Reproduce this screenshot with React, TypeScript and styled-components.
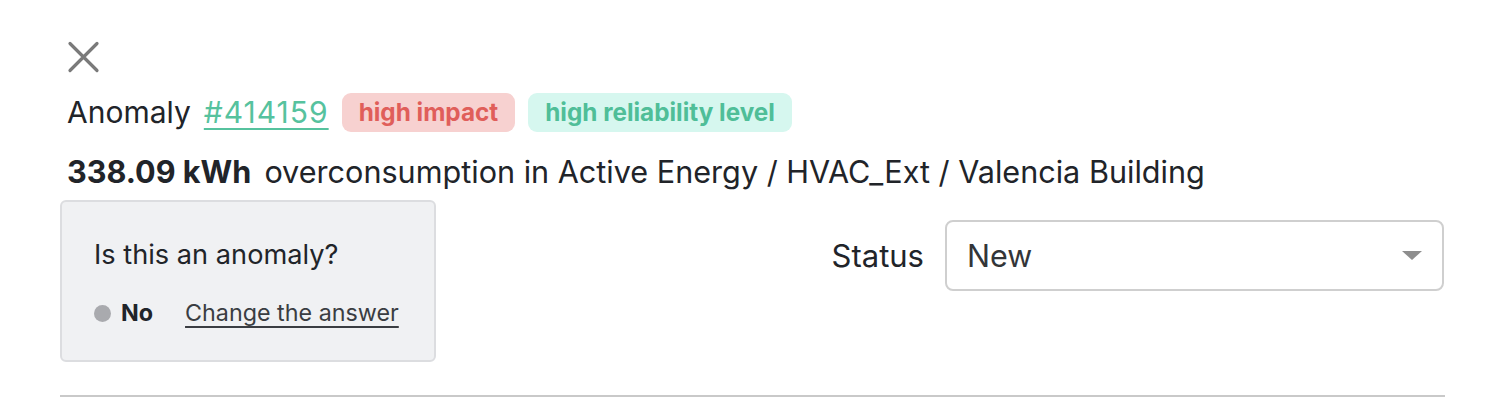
import React from "react";
import styled, { createGlobalStyle } from "styled-components";

const Global = createGlobalStyle`
  html, body { margin: 0; padding: 0; background: #ffffff; }
  body { font-family: Inter, "Noto Sans", Arial, sans-serif; color: #212429; }
`;

const Page = styled.div`
  width: 1385px;
  margin-left: 60px;
  padding-top: 40px;
`;

const CloseButton = styled.button`
  display: block;
  width: 34px;
  height: 34px;
  margin-left: 6px;
  padding: 0;
  border: none;
  background: transparent;
  cursor: pointer;
`;

const Header = styled.div`
  padding-left: 7px;
  display: flex;
  flex-direction: column;
  gap: 20px;
  margin-top: 18px;
`;

const TitleRow = styled.div`
  display: flex;
  align-items: center;
  gap: 13px;
  font-size: 30px;
  line-height: 40px;
`;

const IdLink = styled.a`
  color: #56c29e;
  letter-spacing: 1px;
  text-decoration: underline;
  text-underline-offset: 5px;
  text-decoration-thickness: 2px;
`;

const Badge = styled.span<{ $tone: "red" | "green" }>`
  display: inline-flex;
  align-items: center;
  box-sizing: border-box;
  height: 39px;
  padding: 0 17px;
  border-radius: 9px;
  font-size: 24.3px;
  font-weight: 700;
  background: ${(p) => (p.$tone === "red" ? "#f7d1d0" : "#d6f7ef")};
  color: ${(p) => (p.$tone === "red" ? "#e05e5a" : "#4fbe98")};
`;

const Summary = styled.div`
  font-size: 30.6px;
  line-height: 40px;
  display: flex;
  gap: 13px;
`;

const Amount = styled.strong`
  font-weight: 700;
`;

const Row = styled.div`
  display: flex;
  justify-content: space-between;
  align-items: flex-start;
  margin-top: 8px;
`;

const Card = styled.div`
  box-sizing: border-box;
  width: 376px;
  height: 162px;
  background: #f0f1f3;
  border: 2px solid #dcdde0;
  border-radius: 6px;
  display: flex;
  flex-direction: column;
  padding: 36px 0 0 32px;
`;

const Question = styled.div`
  font-size: 27.2px;
  line-height: 34px;
  color: #212429;
`;

const AnswerRow = styled.div`
  display: flex;
  align-items: center;
  margin-top: 26px;
  font-size: 23.3px;
  line-height: 30px;
`;

const Dot = styled.span`
  width: 17px;
  height: 17px;
  border-radius: 50%;
  background: #a9aaae;
  margin-right: 10px;
`;

const AnswerValue = styled.strong`
  font-weight: 700;
  margin-right: 32px;
`;

const ChangeLink = styled.a`
  color: #3a3d42;
  text-decoration: underline;
  text-underline-offset: 5px;
  text-decoration-thickness: 2px;
`;

const StatusGroup = styled.div`
  display: flex;
  align-items: center;
  gap: 21px;
  margin-top: 20px;
  margin-right: 1px;
`;

const StatusLabel = styled.span`
  font-size: 31px;
  color: #212429;
`;

const Select = styled.div`
  box-sizing: border-box;
  width: 499px;
  height: 71px;
  border: 2px solid #cfcfcf;
  border-radius: 8px;
  display: flex;
  align-items: center;
  justify-content: space-between;
  padding: 0 20px 0 20px;
  font-size: 30.5px;
  color: #333538;
`;

const Caret = styled.span`
  width: 0;
  height: 0;
  border-left: 10px solid transparent;
  border-right: 10px solid transparent;
  border-top: 9px solid #8e8e8e;
`;

const Divider = styled.hr`
  margin: 33px 0 0 0;
  border: none;
  height: 2px;
  background: #c9c9c9;
`;

export default function App() {
  return (
    <>
      <Global />
      <Page>
        <CloseButton aria-label="Close">
          <svg width="34" height="34" viewBox="0 0 34 34">
            <path d="M4 3.5 L31 30.5 M31 3.5 L4 30.5" stroke="#7a7a7a" strokeWidth="3.2" strokeLinecap="round" />
          </svg>
        </CloseButton>
        <Header>
          <TitleRow>
            <span>Anomaly</span>
            <IdLink href="#">#414159</IdLink>
            <Badge $tone="red">high impact</Badge>
            <Badge $tone="green">high reliability level</Badge>
          </TitleRow>
          <Summary>
            <Amount>338.09 kWh</Amount>
            <span>overconsumption in Active Energy / HVAC_Ext / Valencia Building</span>
          </Summary>
        </Header>
        <Row>
          <Card>
            <Question>Is this an anomaly?</Question>
            <AnswerRow>
              <Dot />
              <AnswerValue>No</AnswerValue>
              <ChangeLink href="#">Change the answer</ChangeLink>
            </AnswerRow>
          </Card>
          <StatusGroup>
            <StatusLabel>Status</StatusLabel>
            <Select>
              <span>New</span>
              <Caret />
            </Select>
          </StatusGroup>
        </Row>
        <Divider />
      </Page>
    </>
  );
}
